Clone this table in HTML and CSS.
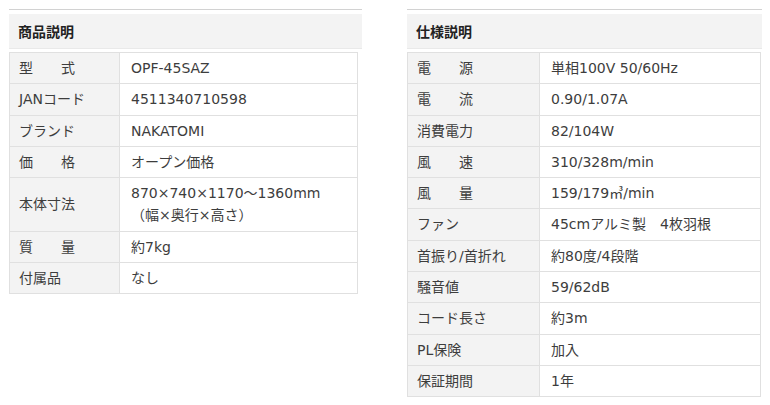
FILE: index.html
```html
<!DOCTYPE html>
<html lang="ja">
<head>
<meta charset="utf-8">
<link rel="stylesheet" href="styles.css">
</head>
<body>
<div class="page">
  <section class="panel panel-left">
    <h2 class="panel-title">商品説明</h2>
    <table class="spec spec-left">
      <colgroup><col class="col-label"><col></colgroup>
      <tr><th>型　　式</th><td>OPF-45SAZ</td></tr>
      <tr><th>JANコード</th><td>4511340710598</td></tr>
      <tr><th>ブランド</th><td>NAKATOMI</td></tr>
      <tr><th>価　　格</th><td>オープン価格</td></tr>
      <tr><th>本体寸法</th><td>870×740×1170〜1360mm<br>（幅×奥行×高さ）</td></tr>
      <tr><th>質　　量</th><td>約7kg</td></tr>
      <tr><th>付属品</th><td>なし</td></tr>
    </table>
  </section>
  <section class="panel panel-right">
    <h2 class="panel-title">仕様説明</h2>
    <table class="spec spec-right">
      <colgroup><col class="col-label"><col></colgroup>
      <tr><th>電　　源</th><td>単相100V 50/60Hz</td></tr>
      <tr><th>電　　流</th><td>0.90/1.07A</td></tr>
      <tr><th>消費電力</th><td>82/104W</td></tr>
      <tr><th>風　　速</th><td>310/328m/min</td></tr>
      <tr><th>風　　量</th><td>159/179㎥/min</td></tr>
      <tr><th>ファン</th><td>45cmアルミ製　4枚羽根</td></tr>
      <tr><th>首振り/首折れ</th><td>約80度/4段階</td></tr>
      <tr><th>騒音値</th><td>59/62dB</td></tr>
      <tr><th>コード長さ</th><td>約3m</td></tr>
      <tr><th>PL保険</th><td>加入</td></tr>
      <tr><th>保証期間</th><td>1年</td></tr>
    </table>
  </section>
</div>
</body>
</html>
```

FILE: styles.css
```css
html, body {
  margin: 0;
  padding: 0;
  background: #ffffff;
}

body {
  font-family: "DejaVu Sans", "Noto Sans CJK JP", sans-serif;
  font-size: 14px;
  color: #3d3d3d;
}

.page {
  display: flex;
  align-items: flex-start;
  padding: 9px 0 0 9px;
  gap: 45px;
}

.panel {
  border-top: 1px solid #d2d2d2;
}

.panel-left {
  width: 353px;
}

.panel-right {
  width: 355px;
}

.panel-title {
  margin: 4px 0 0 0;
  height: 35px;
  box-sizing: border-box;
  padding: 0 0 0 9px;
  display: flex;
  align-items: center;
  background: #f3f3f3;
  border-bottom: 1px solid #e9e9e9;
  font-size: 14px;
  font-weight: bold;
  color: #222222;
  font-family: "Noto Sans CJK JP", sans-serif;
}

.spec {
  margin-top: 3px;
  border-collapse: collapse;
  table-layout: fixed;
}

.spec-left {
  width: 349px;
}

.spec-right {
  width: 354px;
}

.spec-left .col-label {
  width: 110px;
}

.spec-right .col-label {
  width: 132px;
}

.spec th,
.spec td {
  border: 1px solid #e0e0e0;
  padding: 4px 0;
  line-height: 22.3px;
  text-align: left;
  vertical-align: middle;
  font-weight: normal;
  white-space: nowrap;
}

.spec th {
  background: #f3f3f3;
  padding-left: 9px;
}

.spec td {
  background: #ffffff;
  padding-left: 11px;
}
```
